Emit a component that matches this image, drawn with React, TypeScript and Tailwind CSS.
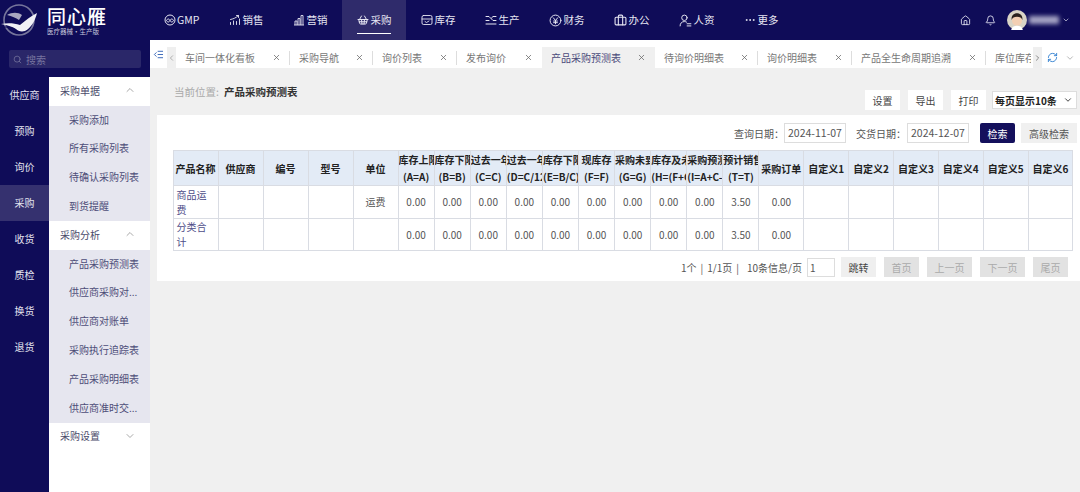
import {
  Bell,
  Briefcase,
  ChevronDown,
  ChevronLeft,
  ChevronRight,
  ChevronUp,
  Ellipsis,
  Home,
  IndentDecrease,
  RefreshCw,
  Search,
  ShoppingBasket,
  X,
} from "lucide-react";
import type { ReactNode } from "react";

function GmpIcon() {
  return (
    <svg viewBox="0 0 24 24" className="h-3 w-3" fill="none" stroke="currentColor" strokeWidth="2">
      <circle cx="12" cy="12" r="10" />
      <path d="M5 13c2-4 5-4 7 0s5 4 7 0c-2-4-5-4-7 0s-5 4-7 0Z" />
    </svg>
  );
}

function SalesIcon() {
  return (
    <svg viewBox="0 0 24 24" className="h-3 w-3" fill="none" stroke="currentColor" strokeWidth="1.8" strokeLinecap="round">
      <path d="M3 21v-4M9 21v-7M15 21v-6M21 21V10M3 11c5-1 11-3 16-8M15 3h4v4" />
    </svg>
  );
}

function MarketIcon() {
  return (
    <svg viewBox="0 0 24 24" className="h-3 w-3" fill="none" stroke="currentColor" strokeWidth="1.8" strokeLinejoin="round">
      <path d="M2 22h20M4 22v-8h4v8M10 22V9h4v13M16 22V3h4v19" />
    </svg>
  );
}

function StockIcon() {
  return (
    <svg viewBox="0 0 24 24" className="h-3 w-3" fill="none" stroke="currentColor" strokeWidth="1.8" strokeLinecap="round" strokeLinejoin="round">
      <rect x="2" y="3" width="20" height="18" rx="3" />
      <path d="M2 10h20M8 15l3 2 5-3" />
    </svg>
  );
}

function ProductionIcon() {
  return (
    <svg viewBox="0 0 24 24" className="h-3 w-3" fill="none" stroke="currentColor" strokeWidth="2" strokeLinecap="round">
      <path d="M2 5h6l8 8h6M22 5h-6l-3 3M2 13h6M2 20h20" />
    </svg>
  );
}

function YenIcon() {
  return (
    <svg viewBox="0 0 24 24" className="h-[13px] w-[13px]" fill="none" stroke="currentColor" strokeWidth="1.8" strokeLinecap="round">
      <circle cx="12" cy="12" r="10" />
      <path d="m8 7 4 5 4-5M12 12v6M8.500 13h7M8.500 16h7" />
    </svg>
  );
}

function StaffIcon() {
  return (
    <svg viewBox="0 0 24 24" className="h-[13px] w-[13px]" fill="none" stroke="currentColor" strokeWidth="1.8" strokeLinecap="round">
      <circle cx="10" cy="7" r="5" />
      <path d="M2 22c0-5 3-8 8-8 2 0 3 .4 4 1M15 18h7M15 22h7" />
    </svg>
  );
}

function Logo() {
  return (
    <svg viewBox="0 0 38 34" className="h-[34px] w-[38px]" fill="none">
      <circle cx="19" cy="17" r="15" stroke="#77769c" strokeWidth="1.600" />
      <path d="M1 21c7-1.500 13-1 19 1 6-5 11-9 17-12-2 8-6 15-12 18-4 1-7 0-9-2-3-2-8-4-15-5Z" fill="#f0f0f5" />
      <path d="M7 12c5-3 11-3 15 0l-3 5c-3-2-7-4-12-5Z" fill="#a9a8c0" />
      <path d="M4 24c6 0 10 1 14 5" stroke="#0f0c58" strokeWidth="1" />
    </svg>
  );
}

function Avatar() {
  return (
    <svg viewBox="0 0 24 24" className="h-5 w-5">
      <circle cx="12" cy="12" r="12" fill="#d9d4c6" />
      <circle cx="12" cy="13" r="6" fill="#f3cfb3" />
      <path d="M5.500 12C5 6 9 4 12 4s7 2 6.500 8c-1-3-3-4-6.500-4s-5.500 1-6.500 4Z" fill="#2a211d" />
      <path d="M5 24c1-4 4-5 7-5s6 1 7 5Z" fill="#ffffff" />
    </svg>
  );
}

const navItems: { label: string; icon: ReactNode; active?: boolean }[] = [
  { label: "GMP", icon: <GmpIcon /> },
  { label: "销售", icon: <SalesIcon /> },
  { label: "营销", icon: <MarketIcon /> },
  { label: "采购", icon: <ShoppingBasket className="h-3 w-3" />, active: true },
  { label: "库存", icon: <StockIcon /> },
  { label: "生产", icon: <ProductionIcon /> },
  { label: "财务", icon: <YenIcon /> },
  { label: "办公", icon: <Briefcase className="h-[13px] w-[13px]" /> },
  { label: "人资", icon: <StaffIcon /> },
  { label: "更多", icon: <Ellipsis className="h-3 w-3" /> },
];

const tabs = [
  { label: "车间一体化看板", w: "w-[114px]" },
  { label: "采购导航", w: "w-[83px]" },
  { label: "询价列表", w: "w-[84px]" },
  { label: "发布询价", w: "w-[85px]" },
  { label: "产品采购预测表", w: "w-[113px]", active: true },
  { label: "待询价明细表", w: "w-[103px]" },
  { label: "询价明细表", w: "w-[94px]" },
  { label: "产品全生命周期追溯", w: "w-[134px]" },
];

const leftMenu = ["供应商", "预购", "询价", "采购", "收货", "质检", "换货", "退货"];

const group1 = ["采购添加", "所有采购列表", "待确认采购列表", "到货提醒"];
const group2 = ["产品采购预测表", "供应商采购对...", "供应商对账单", "采购执行追踪表", "产品采购明细表", "供应商准时交..."];

const midCols = [
  ["库存上限", "(A=A)"],
  ["库存下限", "(B=B)"],
  ["过去一年", "(C=C)"],
  ["过去一年", "(D=C/12)"],
  ["库存下限", "(E=B/C)"],
  ["现库存", "(F=F)"],
  ["采购未到", "(G=G)"],
  ["库存及未到", "(H=(F+G))"],
  ["采购预测", "(I=A+C-H)"],
  ["预计销售", "(T=T)"],
];

const endCols = ["采购订单", "自定义1", "自定义2", "自定义3", "自定义4", "自定义5", "自定义6"];
const rowValues = ["0.00", "0.00", "0.00", "0.00", "0.00", "0.00", "0.00", "0.00", "0.00", "3.50"];

function GroupTitle({ label, open }: { label: string; open: boolean }) {
  return (
    <div className="flex h-[28.800px] items-center justify-between bg-white pb-[2px] pl-[11px] pr-[14px] text-[#4a4a6a]">
      <span>{label}</span>
      {open ? <ChevronUp className="h-3 w-3 text-[#aaa]" /> : <ChevronDown className="h-3 w-3 text-[#aaa]" />}
    </div>
  );
}

function GroupItems({ items }: { items: string[] }) {
  return (
    <div className="bg-[#e6e6ef] text-[#4d4d78]">
      {items.map((item) => (
        <div key={item} className="flex h-[28.800px] items-center whitespace-nowrap pb-[2px] pl-5">
          {item}
        </div>
      ))}
    </div>
  );
}

function Sidebar() {
  return (
    <aside className="flex w-[150px] shrink-0 flex-col bg-[#0f0c58]">
      <div className="mx-[9px] mt-[10px] flex h-[18px] items-center gap-1 rounded-[2px] bg-[#2a2769] px-1 text-[10px] text-[#77759f]">
        <Search className="h-[9px] w-[9px]" />
        <span>搜索</span>
      </div>
      <div className="mt-[9px] flex min-h-0 flex-1 text-[10px]">
        <div className="w-[49px] shrink-0 text-[#e4e4f0]">
          {leftMenu.map((item) => (
            <div
              key={item}
              className={`flex h-9 items-center justify-center pb-[2px] ${item === "采购" ? "bg-[#35316f]" : ""}`}
            >
              {item}
            </div>
          ))}
        </div>
        <div className="flex-1 bg-white">
          <GroupTitle label="采购单据" open />
          <GroupItems items={group1} />
          <GroupTitle label="采购分析" open />
          <GroupItems items={group2} />
          <GroupTitle label="采购设置" open={false} />
        </div>
      </div>
    </aside>
  );
}

function TabBar() {
  return (
    <div className="flex h-[28px] shrink-0 items-end bg-white text-[10px] text-[#777]">
      <div className="flex h-full w-[17px] shrink-0 items-center justify-center text-[#2f5fb5]">
        <IndentDecrease className="h-[11px] w-[11px]" />
      </div>
      <div className="flex h-[21px] w-[9px] shrink-0 items-center justify-center bg-[#efefef] text-[#999]">
        <ChevronLeft className="h-[10px] w-[10px]" />
      </div>
      <div className="flex min-w-0 flex-1 overflow-hidden">
        {tabs.map((tab) => (
          <div
            key={tab.label}
            className={`flex h-[21px] shrink-0 items-center justify-between pl-[9px] pr-[9px] ${tab.w} ${
              tab.active ? "bg-[#f0f0f0] text-[#4a4a7a]" : "relative"
            }`}
          >
            <span className="whitespace-nowrap">{tab.label}</span>
            <X className="h-[9px] w-[9px] text-[#666]" />
            {!tab.active && tab.label !== "发布询价" && (
              <span className="absolute right-0 top-[4px] h-[14px] w-px bg-[#ddd]" />
            )}
          </div>
        ))}
        <div className="flex h-[21px] w-[45px] shrink-0 items-center overflow-hidden whitespace-nowrap pl-[9px]">库位库存</div>
      </div>
      <div className="flex h-[21px] w-[9px] shrink-0 items-center justify-center bg-[#efefef] text-[#666]">
        <ChevronRight className="h-[10px] w-[10px]" />
      </div>
      <div className="flex h-[21px] w-[38px] shrink-0 items-center pl-[5px]">
        <RefreshCw className="h-[11px] w-[11px] text-[#2f7fd0]" />
        <ChevronDown className="ml-[7px] h-[10px] w-[10px] text-[#aaa]" />
      </div>
    </div>
  );
}

function ToolButton({ label }: { label: string }) {
  return <button className="h-[20px] w-[35px] bg-white text-[10px] text-[#444]">{label}</button>;
}

function Toolbar() {
  return (
    <div className="flex h-[47px] shrink-0 items-start justify-between pl-[24px] pr-[3px] pt-[22px] text-[10px]">
      <div className="-mt-[8px] flex gap-[5px] text-[10.500px] leading-[20px]">
        <span className="text-[#aaa]">当前位置:</span>
        <span className="font-bold text-[#333]">产品采购预测表</span>
      </div>
      <div className="flex items-center gap-[8px]">
        <ToolButton label="设置" />
        <ToolButton label="导出" />
        <ToolButton label="打印" />
        <div className="-ml-[2px] flex h-[18px] w-[85px] items-center justify-between border border-[#ddd] bg-white pl-[2px] pr-[3px] font-bold text-[#222]">
          <span className="whitespace-nowrap">每页显示10条</span>
          <ChevronDown className="h-[10px] w-[10px]" />
        </div>
      </div>
    </div>
  );
}

function FilterRow() {
  return (
    <div className="flex h-[34px] items-center justify-end pr-[3px] text-[10px] text-[#555]">
      <span>查询日期：</span>
      <div className="flex h-[20px] w-[62px] items-center justify-center border border-[#ddd] text-[10.500px]">2024-11-07</div>
      <span className="ml-[10px]">交货日期：</span>
      <div className="ml-[1px] flex h-[20px] w-[62px] items-center justify-center border border-[#ddd] text-[10.500px]">2024-12-07</div>
      <button className="ml-[11px] h-[20px] w-[35px] rounded-[2px] bg-[#14105c] text-white">检索</button>
      <button className="ml-[6px] h-[20px] w-[56px] bg-[#f0f0f0] text-[#555]">高级检索</button>
    </div>
  );
}

function DataRow({ name, unit }: { name: string; unit?: string }) {
  const td = "border border-[#d9dce3] text-center text-[#555]";
  return (
    <tr className="h-[32.500px]">
      <td className="border border-[#d9dce3] px-[3px] text-left leading-[15px] text-[#4d4d88]">{name}</td>
      <td className={td} />
      <td className={td} />
      <td className={td} />
      <td className={td}>{unit}</td>
      {rowValues.map((v, i) => (
        <td key={i} className={td}>
          {v}
        </td>
      ))}
      <td className={td}>0.00</td>
      <td className={td} />
      <td className={td} />
      <td className={td} />
      <td className={td} />
      <td className={td} />
      <td className={td} />
    </tr>
  );
}

function DataTable() {
  const th = "border border-[#d9dce3] bg-[#e3ebf6] text-center font-bold text-[#222]";
  return (
    <table className="ml-[15.500px] w-[900px] table-fixed border-collapse text-[10px]">
      <colgroup>
        {[0, 1, 2, 3, 4].map((i) => (
          <col key={i} className="w-[45px]" />
        ))}
        {midCols.map((c) => (
          <col key={c[1]} className="w-[36.100px]" />
        ))}
        {endCols.map((c) => (
          <col key={c} className="w-[44.860px]" />
        ))}
      </colgroup>
      <thead>
        <tr className="h-[35px]">
          {["产品名称", "供应商", "编号", "型号", "单位"].map((h) => (
            <th key={h} className={`${th} whitespace-nowrap`}>
              {h}
            </th>
          ))}
          {midCols.map((c) => (
            <th key={c[1]} className={`${th} overflow-hidden whitespace-nowrap leading-[17px]`}>
              <div className="overflow-hidden">{c[0]}</div>
              <div className="overflow-hidden">{c[1]}</div>
            </th>
          ))}
          {endCols.map((h) => (
            <th key={h} className={`${th} whitespace-nowrap`}>
              {h}
            </th>
          ))}
        </tr>
      </thead>
      <tbody>
        <DataRow name="商品运费" unit="运费" />
        <DataRow name="分类合计" />
      </tbody>
    </table>
  );
}

function Pager() {
  const disabled = "h-[20px] bg-[#e2e2e2] text-[#aaa]";
  return (
    <div className="mt-[6px] flex items-center justify-end pr-[12px] text-[10px] text-[#555]">
      <div className="flex gap-[4px]">
        <span>1个</span>
        <span>|</span>
        <span>1/1页</span>
        <span>|</span>
        <span className="ml-[4px]">10条信息/页</span>
      </div>
      <div className="ml-[5px] flex h-[19px] w-[28px] items-center border border-[#ddd] pl-[2px]">1</div>
      <button className="ml-[6px] h-[20px] w-[35px] bg-[#efefef] text-[#444]">跳转</button>
      <button className={`ml-[8px] w-[35px] ${disabled}`}>首页</button>
      <button className={`ml-[8px] w-[45px] ${disabled}`}>上一页</button>
      <button className={`ml-[8px] w-[45px] ${disabled}`}>下一页</button>
      <button className={`ml-[8px] w-[35px] ${disabled}`}>尾页</button>
    </div>
  );
}

export default function App() {
  return (
    <div className="flex h-screen flex-col overflow-hidden bg-[#f0f0f0] font-['Noto_Sans_CJK_SC','Noto_Sans',sans-serif]">
      <header className="flex h-10 shrink-0 items-center bg-[#0f0c58] text-white">
        <div className="flex w-[149px] shrink-0 items-center">
          <Logo />
          <div className="ml-[9px]">
            <div className="mb-[1px] text-[19px] font-medium leading-[20px] tracking-[1px]">同心雁</div>
            <div className="whitespace-nowrap text-[6.500px] leading-[8px] text-[#c8c8dc]">医疗器械·生产版</div>
          </div>
        </div>
        <nav className="flex h-full text-[10.500px] text-[#e6e6f2]">
          {navItems.map((item) => (
            <div
              key={item.label}
              className={`relative flex h-full items-center gap-[1px] px-[15px] ${item.active ? "bg-[#2f2b6b]" : ""}`}
            >
              {item.icon}
              <span>{item.label}</span>
              {item.active && <span className="absolute bottom-[6px] left-[15px] right-[15px] h-px bg-white" />}
            </div>
          ))}
        </nav>
        <div className="ml-auto flex items-center pr-[10px] text-[#dcdcec]">
          <Home className="h-[11px] w-[11px]" />
          <Bell className="ml-[14px] h-[11px] w-[11px]" />
          <div className="ml-[11px]">
            <Avatar />
          </div>
          <div className="ml-[2px] h-[8px] w-[30px] bg-[#a5a4c4] blur-[2px]" />
          <ChevronDown className="ml-[3px] h-[8px] w-[8px]" />
        </div>
      </header>
      <div className="flex min-h-0 flex-1">
        <Sidebar />
        <main className="flex min-w-0 flex-1 flex-col">
          <TabBar />
          <Toolbar />
          <section className="ml-[7px] h-[166px] bg-white pt-[1px]">
            <FilterRow />
            <DataTable />
            <Pager />
          </section>
        </main>
      </div>
    </div>
  );
}
